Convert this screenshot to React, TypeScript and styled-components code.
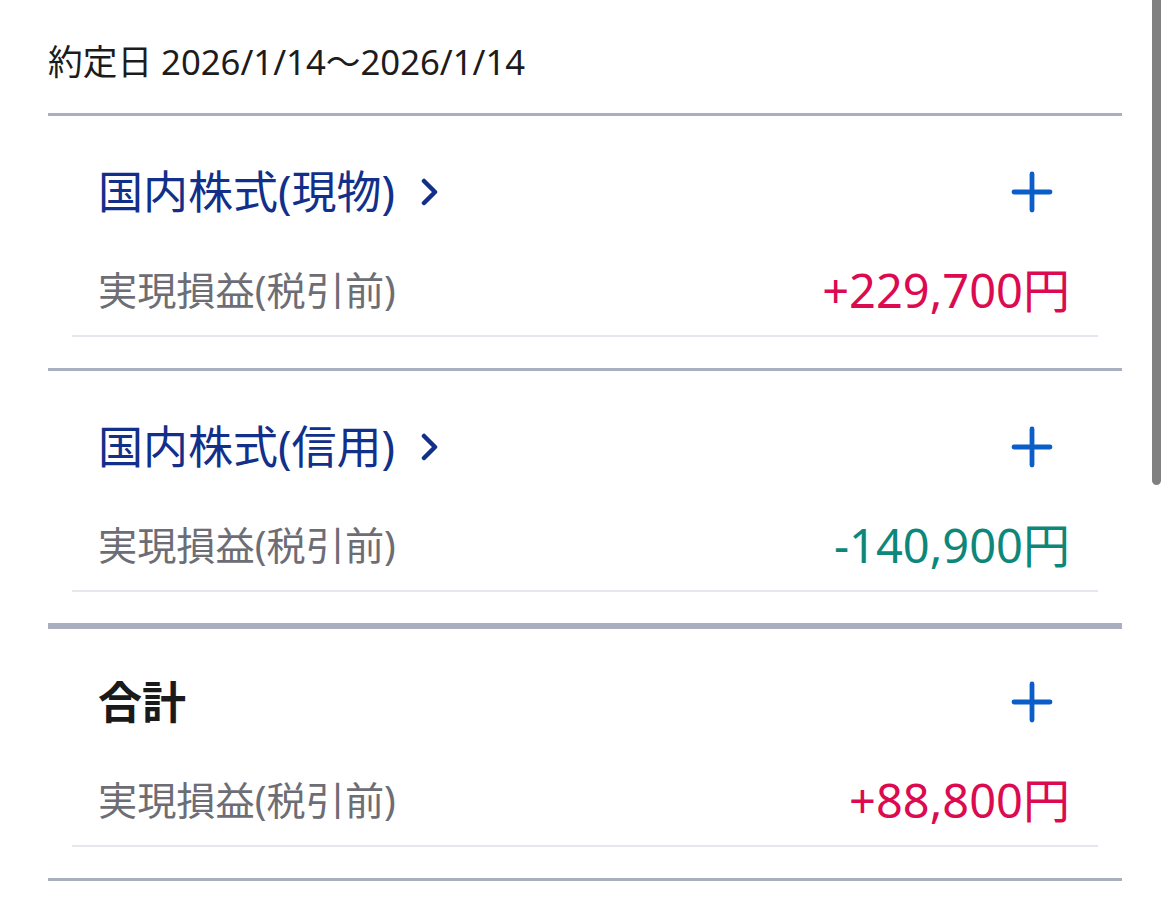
import * as React from 'react';
import styled, { createGlobalStyle } from 'styled-components';

const GlobalStyle = createGlobalStyle`
  html, body {
    margin: 0;
    padding: 0;
    background: #ffffff;
  }
  body {
    font-family: "Noto Sans", "Noto Sans CJK JP", sans-serif;
    -webkit-font-smoothing: antialiased;
  }
`;

const Page = styled.main`
  position: relative;
  width: 1169px;
  min-height: 922px;
  padding: 0 47px 0 48px;
  box-sizing: border-box;
  overflow: hidden;
`;

const Header = styled.div`
  padding: 41px 0 31px;
  font-size: 34.7px;
  line-height: 41px;
  color: #1c1c1e;
`;

const Section = styled.section<{ $total?: boolean }>`
  border-top: ${(p) => (p.$total ? '6px' : '3px')} solid #a9afbf;
  padding-bottom: 31px;
`;

const Inner = styled.div`
  margin: 0 24px;
  border-bottom: 2.5px solid #e6e6ee;
`;

const TitleRow = styled.div<{ $total?: boolean }>`
  display: flex;
  align-items: center;
  justify-content: space-between;
  height: 56px;
  padding: ${(p) => (p.$total ? '45px' : '48px')} 26px 0;
`;

const Title = styled.div<{ $total?: boolean }>`
  display: flex;
  align-items: center;
  gap: 26px;
  font-size: ${(p) => (p.$total ? '44px' : '45px')};
  line-height: 56px;
  font-weight: ${(p) => (p.$total ? 700 : 400)};
  color: ${(p) => (p.$total ? '#1a1a1a' : '#12308a')};
`;

const PlusButton = styled.button`
  display: flex;
  align-items: center;
  justify-content: center;
  width: 44px;
  height: 44px;
  margin-right: 18px;
  padding: 0;
  border: none;
  background: none;
`;

const ValueRow = styled.div`
  display: flex;
  align-items: center;
  justify-content: space-between;
  height: 56px;
  padding: 42px 28px 17px 26px;
`;

const Label = styled.span`
  font-size: 39.2px;
  line-height: 56px;
  color: #6d6d75;
`;

const Amount = styled.span<{ $negative?: boolean }>`
  font-size: 47px;
  line-height: 56px;
  color: ${(p) => (p.$negative ? '#0d877a' : '#dc0a50')};
`;

const ScrollThumb = styled.div`
  position: absolute;
  top: -10px;
  right: 8px;
  width: 9px;
  height: 495px;
  border-radius: 5px;
  background: #808080;
`;

const Chevron = () => (
  <svg width="18" height="28" viewBox="0 0 18 28" fill="none">
    <polyline
      points="3,3 14,14 3,25"
      stroke="#12308a"
      strokeWidth="4.5"
      strokeLinecap="round"
      strokeLinejoin="round"
    />
  </svg>
);

const Plus = () => (
  <svg width="44" height="44" viewBox="0 0 44 44" fill="none">
    <path
      d="M22 4v36M4 22h36"
      stroke="#0b5ec7"
      strokeWidth="4.8"
      strokeLinecap="round"
    />
  </svg>
);

type Row = {
  title: string;
  amount: string;
  negative?: boolean;
  total?: boolean;
};

const rows: Row[] = [
  { title: '国内株式(現物)', amount: '+229,700円' },
  { title: '国内株式(信用)', amount: '-140,900円', negative: true },
  { title: '合計', amount: '+88,800円', total: true },
];

const App = () => (
  <>
    <GlobalStyle />
    <Page>
      <Header>約定日 2026/1/14～2026/1/14</Header>
      {rows.map((r) => (
        <Section key={r.title} $total={r.total}>
          <Inner>
            <TitleRow $total={r.total}>
              <Title $total={r.total}>
                {r.title}
                {!r.total && <Chevron />}
              </Title>
              <PlusButton aria-label="開く">
                <Plus />
              </PlusButton>
            </TitleRow>
            <ValueRow>
              <Label>実現損益(税引前)</Label>
              <Amount $negative={r.negative}>{r.amount}</Amount>
            </ValueRow>
          </Inner>
        </Section>
      ))}
      <Section />
      <ScrollThumb />
    </Page>
  </>
);

export default App;
